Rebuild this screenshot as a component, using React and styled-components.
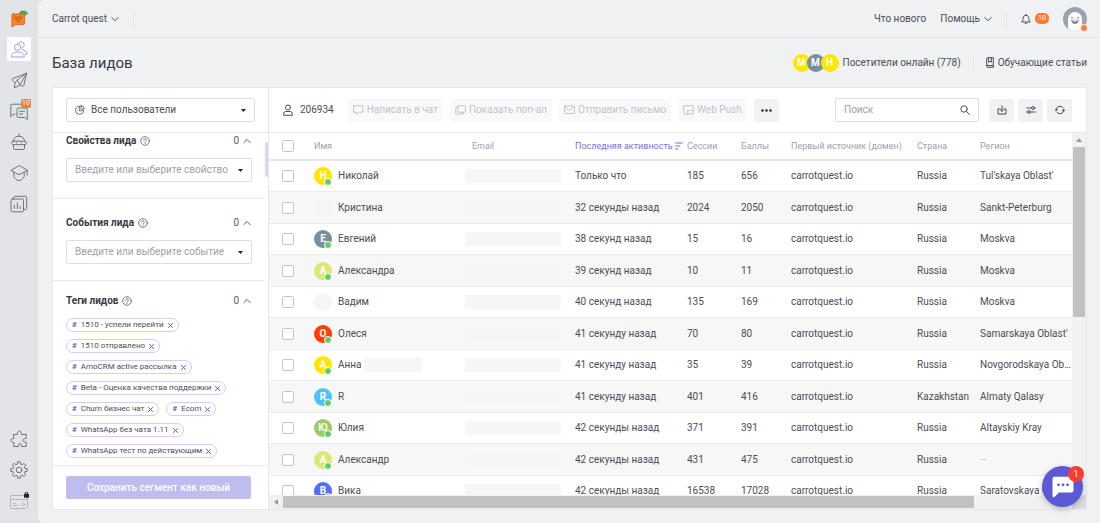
import React from 'react';
import styled, { createGlobalStyle } from 'styled-components';

const GlobalStyle = createGlobalStyle`
  * {
    box-sizing: border-box;
  }

  body {
    margin: 0;
    background: #e2e4e8;
    color: #4a4e57;
    font-family: Roboto, "Liberation Sans", sans-serif;
    font-size: 10px;
    line-height: 16px;
  }

  button, input, select {
    font: inherit;
    color: inherit;
  }

  h1, h2 {
    margin: 0;
  }
`;

/* Icons */

const Svg = styled.svg`
  display: block;
  flex: none;
  fill: none;
  stroke: currentColor;
  stroke-width: ${(p) => p.$stroke || 1};
  stroke-linecap: round;
  stroke-linejoin: round;
`;

const Icon = ({ w = 18, h = w, stroke, children }) => (
  <Svg width={w} height={h} viewBox={`0 0 ${w} ${h}`} $stroke={stroke} aria-hidden="true">
    {children}
  </Svg>
);

const LogoIcon = () => (
  <Icon>
    <path d="M9.800 4.700C9 2 11 .4 13.200 1.200c1.500-.6 3.600.2 4.500 2.300-1.300 1.700-3 2-4.700 1.500z" fill="#3fb34f" stroke="#2f9540" strokeWidth=".6" />
    <path d="M3.200 3.900h9.600a1.800 1.800 0 0 1 1.800 1.800v7.100a1.800 1.800 0 0 1-1.800 1.800H5.200l-3.300 2.500V5.700a1.500 1.500 0 0 1 1.300-1.800z" fill="#fb8427" stroke="#cf5f17" strokeWidth=".8" />
    <path d="M4 7.200h8.500M5.200 9.200h6M6.700 11.200h3" stroke="#a8440c" strokeWidth=".8" />
  </Icon>
);

const PeopleIcon = () => (
  <Icon>
    <circle cx="7.500" cy="7.200" r="3.100" />
    <path d="M1.200 16.600c.2-3.400 3-4.600 6.600-4.600s6.300 1.200 6.500 4.600zM8.200 3.600a3.200 3.200 0 1 1 3.500 4.500M12.300 9.500c2.900.7 4.500 2.300 4.700 4.700l-1.700.1" />
  </Icon>
);

const PlaneIcon = () => (
  <Icon>
    <path d="M16.600 2.200 3.200 7.400c-1.300.5-1.400 1.300-.8 1.900l2 2M16.600 2.200l-2.700 12c-.3 1.200-1.100 1.500-2 .9l-1.700-1.300M16.600 2.200 6.700 9.400c-1.200.9-2 3-2.300 6.900M7 9.300l3.200 4.500-4 2.400-1.800.1M10.300 13.600l6.300-11.400" />
  </Icon>
);

const ChatsIcon = () => (
  <Icon>
    <path d="M12.800 2.200H2A1.300 1.300 0 0 0 .8 3.500v11.200l2.500-2.500h1.500M16 6H8.200A1.300 1.300 0 0 0 7 7.300v6.900a1.300 1.300 0 0 0 1.300 1.300h6.400l2.600 2.100V7.300A1.300 1.300 0 0 0 16 6zM9.600 9.300h5M9.600 12h3" />
  </Icon>
);

const RobotIcon = () => (
  <Icon>
    <path d="M9 .9v2.300M3.500 8.200C3.500 5 5.700 3.200 9 3.200s5.500 1.800 5.500 5M3 8.200h12a1.200 1.200 0 0 1 1.200 1.200v1a1.200 1.200 0 0 1-1.200 1.200H3a1.200 1.200 0 0 1-1.200-1.200v-1A1.200 1.200 0 0 1 3 8.200zM3.500 11.600v3.700a1.200 1.200 0 0 0 1.200 1.200h8.600a1.200 1.200 0 0 0 1.200-1.200v-3.700M6.500 9.800v.2M11.500 9.800v.2" />
  </Icon>
);

const CapIcon = () => (
  <Icon>
    <path d="M9 1.700.8 6.500 9 10.700l8.200-4.200zM17.200 6.500v4.700M3.800 8.200v4.300c1.200 2.600 3 4 5.200 4s4-1.400 5.200-4V8.200" />
  </Icon>
);

const ReportIcon = () => (
  <Icon>
    <rect x="1" y="4" width="12.500" height="12.800" rx="1.300" />
    <path d="M3.800 4V2.500a1.200 1.200 0 0 1 1.200-1.200h10.500a1.200 1.200 0 0 1 1.200 1.200v10.800a1.200 1.200 0 0 1-1.200 1.200h-2M4.300 10.500v3M7.300 8v5.500M10.200 11.500v2" />
  </Icon>
);

const PuzzleIcon = () => (
  <Icon>
    <path d="M3.800 4.500h3.400c.4 0 .5-.3.400-.7C7.200 2.200 8 1 9.300 1s2.200 1.200 1.800 2.800c-.1.4.1.700.500.700h4.600v3.800c0 .4-.3.500-.7.400-1.500-.4-2.600.3-2.600 1.600s1.100 2 2.600 1.600c.4-.1.700.1.700.5v4.100h-4.300c-.3 0-.5-.3-.4-.6.3-1.300-.3-2.200-1.400-2.200s-1.700.9-1.400 2.200c.1.300-.1.600-.4.600H3.800v-4c0-.4-.2-.5-.6-.4C1.800 12.400.8 11.600.8 10.400s1-2 2.400-1.700c.4.100.6-.1.600-.4z" />
  </Icon>
);

const teeth = Array.from({ length: 8 }, (_, i) => {
  const at = (r, deg) => {
    const a = ((i * 45 + deg) * Math.PI) / 180;
    return `${(9 + r * Math.sin(a)).toFixed(2)} ${(9 - r * Math.cos(a)).toFixed(2)}`;
  };
  return `${at(8.3, -9)}L${at(8.3, 9)}L${at(6.2, 14)}L${at(6.2, 31)}`;
}).join('L');

const GearIcon = () => (
  <Icon>
    <path d={`M${teeth}z`} />
    <circle cx="9" cy="9" r="2.800" />
  </Icon>
);

const CardIcon = () => (
  <Icon w={20} h={18}>
    <g stroke="#b3b6bc">
      <rect x="1.500" y="3.500" width="17" height="13" rx="1" />
      <path d="M1.500 7.500h17M4.500 11.500h1.500M4.500 13.500h4" />
      <circle cx="14.500" cy="12.500" r="1.200" />
    </g>
    <rect x="15" y="1.700" width="5" height="4" rx=".6" fill="#22252b" stroke="none" />
    <path d="M16.300 2V1.300a1.200 1.200 0 0 1 2.400 0V2" stroke="#22252b" />
  </Icon>
);

const ChevronIcon = ({ up }) => (
  <Icon w={8}>
    <path d={up ? 'M.8 5.700 4 2.500l3.200 3.200' : 'M.8 2.500 4 5.700l3.200-3.200'} />
  </Icon>
);

const CaretIcon = () => (
  <Icon w={5} h={3}>
    <path d="M0 0h5L2.500 3z" fill="#22252b" stroke="none" />
  </Icon>
);

const BellIcon = () => (
  <Icon w={10}>
    <path d="M1 7.700c1-1 1.100-2 1.100-3.500C2.100 2.500 3.300 1.300 5 1.300s2.900 1.200 2.900 2.900c0 1.500.1 2.500 1.100 3.500zM3.900 9.200c.5.500 1.700.5 2.200 0M5 .5v.8" />
  </Icon>
);

const BookIcon = () => (
  <Icon w={8} h={11}>
    <path d="M.7 1.700A1 1 0 0 1 1.700.7h5.600v9.600H1.700a1 1 0 0 1-1-1zM.7 8.500h6.600M2.600 1v4.200l1.400-1 1.400 1V1" />
  </Icon>
);

const PieIcon = () => (
  <Icon w={10} stroke=".8">
    <path d="M4.300 1.200a4.100 4.100 0 1 0 4.500 4.500H4.300z" />
    <path d="M6 .7v3.400h3.400A3.400 3.400 0 0 0 6 .7z" />
  </Icon>
);

const QuestionIcon = () => (
  <Icon w={10} stroke=".8">
    <circle cx="5" cy="5" r="4.300" />
    <path d="M3.700 4a1.300 1.300 0 1 1 2 1.100c-.5.300-.7.500-.7 1M5 7.400v.1" />
  </Icon>
);

const UserIcon = () => (
  <Icon w={10} h={12}>
    <circle cx="5" cy="3.500" r="2.500" />
    <path d="M.7 10.900V9.500a2 2 0 0 1 2-2h4.600a2 2 0 0 1 2 2v1.400z" />
  </Icon>
);

const MessageIcon = () => (
  <Icon w={11} h={10}>
    <path d="M1 .8h9v6.400H5.500L3.200 9.300V7.200H1z" />
  </Icon>
);

const PopupIcon = () => (
  <Icon w={11} h={10}>
    <rect x="2.800" y=".8" width="7.600" height="6.400" rx=".6" />
    <path d="M2.800 2.800H.8V9h7.500V7.200" />
  </Icon>
);

const MailIcon = () => (
  <Icon w={11} h={10}>
    <rect x=".6" y="1" width="9.800" height="7.600" rx=".6" />
    <path d="m1 1.800 4.500 3.700L10 1.800" />
  </Icon>
);

const PushIcon = () => (
  <Icon w={11} h={10}>
    <path d="M4.700 9H.7V.8h9.600V9H4.700V5.500h5.600" />
  </Icon>
);

const DotsIcon = () => (
  <Icon w={11} h={3}>
    <g fill="#22252b" stroke="none">
      <circle cx="1.500" cy="1.500" r="1.200" />
      <circle cx="5.500" cy="1.500" r="1.200" />
      <circle cx="9.500" cy="1.500" r="1.200" />
    </g>
  </Icon>
);

const SearchIcon = () => (
  <Icon w={10}>
    <circle cx="4" cy="4" r="3.200" />
    <path d="m6.400 6.400 3 3" />
  </Icon>
);

const DownloadIcon = () => (
  <Icon w={10}>
    <path d="M3 4H1v5h8V4H7M5 .8v5.400M3.400 4.800 5 6.400l1.600-1.600" />
  </Icon>
);

const SlidersIcon = () => (
  <Icon w={10}>
    <path d="M.8 3h4.700M8.500 3h.8M.8 7h.8M4.500 7h4.800" />
    <circle cx="7" cy="3" r="1.400" />
    <circle cx="3" cy="7" r="1.400" />
  </Icon>
);

const RefreshIcon = () => (
  <Icon w={10}>
    <path d="M1.200 4.500A3.900 3.900 0 0 1 8 2.600M8.800 5.500A3.900 3.900 0 0 1 2 7.400" />
    <path d="M0 4.200h2.600L1.300 6zM7.400 5.800H10L8.700 4z" fill="currentColor" strokeWidth=".4" />
  </Icon>
);

const SortIcon = () => (
  <Icon w={8}>
    <path d="M.6 1h6.800M.6 4h4.300M.6 7h2.200" />
  </Icon>
);

const CrossIcon = () => (
  <Icon w={5}>
    <path d="m.5.500 4 4M4.500.500l-4 4" />
  </Icon>
);

const BotFace = () => (
  <Icon w={24}>
    <circle cx="12" cy="12" r="12" fill="#9ca2b0" stroke="none" />
    <path d="M5 21.500V12a7 7 0 0 1 14 0v9.500q-3 2.500-7 2.500t-7-2.500z" fill="#fff" stroke="none" />
    <path d="M8.200 10.800q1-1 2 0M13.800 10.800q1-1 2 0" stroke="#828998" />
    <path d="M8.200 12.800h7.600c0 2.800-1.600 4.200-3.800 4.200s-3.800-1.400-3.800-4.200z" fill="#828998" stroke="none" />
    <path d="M9.500 13.200h5v1h-5z" fill="#fff" stroke="none" />
  </Icon>
);

const BubbleIcon = () => (
  <Icon w={22}>
    <path d="M2.500.800h17a2 2 0 0 1 2 2v11.700a2 2 0 0 1-2 2H7l-4.300 4.300c-.9.900-2.200.4-2.200-.9V2.800a2 2 0 0 1 2-2z" fill="#fff" stroke="none" />
    <g fill="#5b5ad4" stroke="none">
      <circle cx="6.500" cy="8.800" r="1.400" />
      <circle cx="11" cy="8.800" r="1.400" />
      <circle cx="15.500" cy="8.800" r="1.400" />
    </g>
  </Icon>
);

/* Shell */

const Shell = styled.div`
  display: flex;
  height: 100vh;
`;

const Sidebar = styled.nav`
  display: flex;
  flex-direction: column;
  align-items: center;
  gap: 7px;
  width: 38px;
  padding: 10px 0;
`;

const Logo = styled.a`
  margin-bottom: 2px;
`;

const NavLink = styled.a`
  position: relative;
  display: flex;
  align-items: center;
  justify-content: center;
  width: 24px;
  height: 24px;
  border-radius: 2px;
  color: ${(p) => (p.$active ? '#9c9be6' : '#70757e')};
  background: ${(p) => (p.$active ? '#fff' : 'none')};
`;

const NavBadge = styled.span`
  position: absolute;
  top: 0;
  right: 0;
  width: 10px;
  border-radius: 2px;
  background: #fd7a35;
  color: #fff;
  font-size: 7px;
  line-height: 9px;
  text-align: center;
`;

const Spacer = styled.div`
  flex: 1;
`;

const Main = styled.main`
  display: flex;
  flex: 1;
  flex-direction: column;
  min-width: 0;
  border-radius: 6px 0 0 6px;
  background: #f0f1f3;
`;

const TopBar = styled.header`
  display: flex;
  align-items: center;
  gap: 14px;
  height: 38px;
  padding: 0 13px 0 14px;
  border-bottom: 1px solid #e4e6ea;
`;

const TextButton = styled.button`
  display: flex;
  align-items: center;
  gap: 4px;
  padding: 0;
  border: 0;
  background: none;
`;

const TextLink = styled.a`
  display: flex;
  align-items: center;
  gap: 4px;
  color: inherit;
  text-decoration: none;
  white-space: nowrap;
`;

const Divider = styled.span`
  width: 1px;
  height: 16px;
  background: #e4e6ea;
`;

const Counter = styled.span`
  width: 14px;
  border-radius: 5px;
  background: #fd7a35;
  color: #fff;
  font-size: 7px;
  line-height: 11px;
  text-align: center;
`;

const Profile = styled.button`
  position: relative;
  padding: 0;
  border: 0;
  background: none;
`;

const StatusDot = styled.span`
  position: absolute;
  right: ${(p) => (p.$busy ? -1 : 0)}px;
  bottom: -1px;
  width: 8px;
  height: 8px;
  border: 1px solid ${(p) => (p.$busy ? '#f0f1f3' : '#fff')};
  border-radius: 50%;
  background: ${(p) => (p.$busy ? '#fd7a35' : '#62cc62')};
`;

const TitleBar = styled.div`
  display: flex;
  align-items: center;
  gap: 12px;
  height: 49px;
  padding: 0 13px 0 14px;
`;

const Title = styled.h1`
  font-size: 15px;
  font-weight: 400;
  color: #363a42;
`;

const Stack = styled.span`
  display: flex;

  > * + * {
    margin-left: -4px;
  }
`;

const Avatar = styled.span`
  position: relative;
  flex: none;
  width: 18px;
  height: 18px;
  border-radius: 50%;
  background: ${(p) => p.$color};
  color: #fff;
  font-size: 10px;
  font-weight: 700;
  line-height: 18px;
  text-align: center;
`;

const Panel = styled.div`
  display: flex;
  flex: 1;
  min-height: 0;
  margin: 0 13px 13px 14px;
  border: 1px solid #e8e9ed;
  background: #fff;
`;

/* Filters */

const Filters = styled.aside`
  display: flex;
  flex: none;
  flex-direction: column;
  width: 216px;
  border-right: 1px solid #e4e6ea;
`;

const SegmentBar = styled.div`
  display: flex;
  align-items: center;
  height: 45px;
  padding: 0 13px;
  border-bottom: 1px solid #e8e9ed;
`;

const Field = styled.label`
  display: flex;
  flex: ${(p) => (p.$grow ? 1 : 'none')};
  align-items: center;
  gap: 6px;
  height: 24px;
  padding: 0 8px;
  border: 1px solid #dcdee4;
  border-radius: 2px;
  background: #fff;
`;

const Select = styled.select`
  flex: 1;
  min-width: 0;
  padding: 0;
  border: 0;
  outline: 0;
  appearance: none;
  background: none;
  color: ${(p) => (p.$muted ? '#9da1ac' : 'inherit')};
`;

const FilterBody = styled.div`
  display: flex;
  flex: 1;
  min-height: 0;
`;

const FilterList = styled.div`
  flex: 1;
  overflow: hidden;
`;

const FilterThumb = styled.div`
  width: 3px;
  height: 35px;
  margin-top: 9px;
  border-radius: 2px;
  background: #d6d6f6;
`;

const Section = styled.section`
  display: flex;
  flex-direction: column;
  gap: 9px;
  padding: ${(p) => (p.$dense ? 12 : 16)}px 13px 16px;
  border-bottom: 1px solid #e8e9ed;

  &:first-child {
    padding-top: 0;
  }
`;

const SectionHead = styled.div`
  display: flex;
  align-items: center;
  gap: 4px;
  padding-right: 1px;
  color: #565b65;
`;

const SectionTitle = styled.h2`
  color: #363a42;
  font-size: 10px;
  font-weight: 700;
`;

const Tags = styled.div`
  display: flex;
  flex-wrap: wrap;
  gap: 7px;
`;

const Tag = styled.span`
  display: flex;
  align-items: center;
  gap: 4px;
  height: 14px;
  padding: 0 5px;
  border: 1px solid #cfcff3;
  border-radius: 7px;
  font-size: 8px;
  white-space: nowrap;

  b {
    color: #5b5ad4;
  }
`;

const TagRemove = styled.button`
  padding: 0;
  border: 0;
  background: none;
  color: #5b5ad4;
`;

const FilterFooter = styled.div`
  padding: 10px 13px;
  border-top: 1px solid #e8e9ed;
`;

const SaveButton = styled.button`
  width: 185px;
  height: 23px;
  padding: 0;
  border: 0;
  border-radius: 2px;
  background: #bebdf0;
  color: #fff;
  font-weight: 500;
`;

/* Leads */

const Leads = styled.section`
  display: flex;
  flex: 1;
  flex-direction: column;
  min-width: 0;
`;

const Toolbar = styled.div`
  display: flex;
  align-items: center;
  justify-content: space-between;
  height: 45px;
  padding: 0 14px;
  border-bottom: 1px solid #e8e9ed;
`;

const ToolGroup = styled.div`
  display: flex;
  align-items: center;
  gap: ${(p) => p.$gap}px;
`;

const Count = styled.div`
  display: flex;
  align-items: center;
  gap: 7px;
  margin-right: 7px;
`;

const ToolButton = styled.button`
  display: flex;
  align-items: center;
  justify-content: center;
  gap: 3px;
  min-width: 25px;
  height: 23px;
  padding: 0 5px;
  border: 0;
  border-radius: 2px;
  background: #f0f1f3;
  white-space: nowrap;

  &:disabled {
    background: #f8f9fa;
    color: #c1c4ca;
  }
`;

const SearchField = styled(Field)`
  width: 144px;
  margin-right: 6px;
`;

const SearchInput = styled.input`
  flex: 1;
  min-width: 0;
  padding: 0;
  border: 0;
  outline: 0;

  &::placeholder {
    color: #9da1ac;
  }
`;

const TableArea = styled.div`
  display: grid;
  flex: 1;
  grid-template: minmax(0, 1fr) 14px / minmax(0, 1fr) 14px;
  min-height: 0;
`;

const TableView = styled.div`
  overflow: hidden;
`;

const Table = styled.table`
  width: 100%;
  border-collapse: separate;
  border-spacing: 0;
  table-layout: fixed;
`;

const Col = styled.col`
  width: ${(p) => (p.$width ? `${p.$width}px` : 'auto')};
`;

const Th = styled.th`
  height: 28px;
  padding: 0;
  padding-left: ${(p) => p.$indent || 0}px;
  border-bottom: 2px solid #e4e5ed;
  color: ${(p) => (p.$sorted ? '#7473dd' : '#9da1ac')};
  font-size: 9px;
  font-weight: 400;
  text-align: left;
  white-space: nowrap;
`;

const SortButton = styled(TextButton)`
  gap: 2px;
`;

const Tr = styled.tr`
  > td {
    height: 31px;
  }

  &:nth-child(even) > td {
    height: 32px;
    background: #f7f7f7;
  }
`;

const Td = styled.td`
  padding: 0;
  border-bottom: 1px solid #ebecef;
  overflow: hidden;
  text-overflow: ellipsis;
  white-space: nowrap;
`;

const Check = styled.input`
  display: block;
  width: 12px;
  height: 12px;
  margin: 0 0 0 13px;
  border: 1px solid #c3c6ce;
  border-radius: 2px;
  appearance: none;
  background: #fff;
`;

const Person = styled.span`
  display: flex;
  align-items: center;
  gap: 6px;
`;

const FullName = styled.span`
  display: flex;
  align-items: center;
  gap: 2px;
`;

const Redacted = styled.span`
  display: block;
  width: ${(p) => p.$width}px;
  height: 14px;
  background: #f6f6f7;
`;

const Empty = styled.span`
  color: #c1c4ca;
`;

const Track = styled.div`
  display: flex;
  flex-direction: ${(p) => (p.$vertical ? 'column' : 'row')};
  padding: ${(p) => (p.$vertical ? '0 1px' : '1px 0')};
  background: #f1f1f1;
`;

const Arrow = styled.div`
  display: flex;
  align-items: center;
  justify-content: center;
  flex: 0 0 14px;
  color: #9a9a9a;
`;

const Thumb = styled.div`
  flex: 0 0 ${(p) => p.$size};
  background: #c1c1c1;
`;

const Corner = styled.div`
  background: #dcdcdc;
`;

const ChatButton = styled.button`
  position: fixed;
  right: 17px;
  bottom: 16px;
  display: flex;
  align-items: center;
  justify-content: center;
  width: 41px;
  height: 41px;
  padding: 0;
  border: 0;
  border-radius: 50%;
  background: #5b5ad4;
  box-shadow: 0 2px 6px rgba(0, 0, 0, 0.25);
`;

const ChatCount = styled.span`
  position: absolute;
  top: 0;
  right: -1px;
  width: 16px;
  border-radius: 50%;
  background: #ff3b30;
  color: #fff;
  font-size: 9px;
  line-height: 16px;
`;

const navTop = [
  { label: 'Лиды', icon: <PeopleIcon />, active: true },
  { label: 'Сообщения', icon: <PlaneIcon /> },
  { label: 'Диалоги', icon: <ChatsIcon />, badge: 10 },
  { label: 'Чат-боты', icon: <RobotIcon /> },
  { label: 'База знаний', icon: <CapIcon /> },
  { label: 'Аналитика', icon: <ReportIcon /> },
];

const navBottom = [
  { label: 'Интеграции', icon: <PuzzleIcon /> },
  { label: 'Настройки', icon: <GearIcon /> },
  { label: 'Оплата', icon: <CardIcon /> },
];

const tags = [
  '1510 - успели перейти',
  '1510 отправлено',
  'AmoCRM active рассылка',
  'Beta - Оценка качества поддержки',
  'Churn бизнес чат',
  'Ecom',
  'WhatsApp без чата 1.11',
  'WhatsApp тест по действующим',
];

const actions = [
  { label: 'Написать в чат', icon: <MessageIcon /> },
  { label: 'Показать поп-ап', icon: <PopupIcon /> },
  { label: 'Отправить письмо', icon: <MailIcon /> },
  { label: 'Web Push', icon: <PushIcon /> },
];

const columns = [45, 151, 110, 112, 54, 50, 126, 63, 0];

const leads = [
  { name: 'Николай', color: '#ffe600', seen: 'Только что', sessions: 185, score: 656, country: 'Russia', region: "Tul'skaya Oblast'" },
  { name: 'Кристина', seen: '32 секунды назад', sessions: 2024, score: 2050, country: 'Russia', region: 'Sankt-Peterburg' },
  { name: 'Евгений', color: '#78909c', seen: '38 секунд назад', sessions: 15, score: 16, country: 'Russia', region: 'Moskva' },
  { name: 'Александра', color: '#dce775', seen: '39 секунд назад', sessions: 10, score: 11, country: 'Russia', region: 'Moskva' },
  { name: 'Вадим', seen: '40 секунд назад', sessions: 135, score: 169, country: 'Russia', region: 'Moskva' },
  { name: 'Олеся', color: '#ff3d00', seen: '41 секунду назад', sessions: 70, score: 80, country: 'Russia', region: "Samarskaya Oblast'" },
  { name: 'Анна', color: '#ffe600', surname: true, seen: '41 секунду назад', sessions: 35, score: 39, country: 'Russia', region: "Novgorodskaya Oblast'" },
  { name: 'R', color: '#4fc3f7', seen: '41 секунду назад', sessions: 401, score: 416, country: 'Kazakhstan', region: 'Almaty Qalasy' },
  { name: 'Юлия', color: '#9ccc65', seen: '42 секунды назад', sessions: 371, score: 391, country: 'Russia', region: 'Altayskiy Kray' },
  { name: 'Александр', color: '#dce775', seen: '42 секунды назад', sessions: 431, score: 475, country: 'Russia' },
  { name: 'Вика', color: '#536dfe', seen: '42 секунды назад', sessions: 16538, score: 17028, country: 'Russia', region: "Saratovskaya Oblast'" },
];

const NavItem = ({ label, icon, active, badge }) => (
  <NavLink href="#" aria-label={label} $active={active}>
    {icon}
    {badge && <NavBadge>{badge}</NavBadge>}
  </NavLink>
);

const FilterSection = ({ title, dense, children }) => (
  <Section $dense={dense}>
    <SectionHead>
      <SectionTitle>{title}</SectionTitle>
      <QuestionIcon />
      <Spacer />
      <span>0</span>
      <ChevronIcon up />
    </SectionHead>
    {children}
  </Section>
);

const FilterSelect = ({ text }) => (
  <Field>
    <Select aria-label={text} $muted>
      <option>{text}</option>
    </Select>
    <CaretIcon />
  </Field>
);

const LeadRow = ({ lead }) => (
  <Tr>
    <Td>
      <Check type="checkbox" aria-label={lead.name} />
    </Td>
    <Td>
      <Person>
        <Avatar $color={lead.color || '#f5f5f6'}>
          {lead.color && lead.name[0]}
          {lead.color && <StatusDot />}
        </Avatar>
        <FullName>
          {lead.name}
          {lead.surname && <Redacted $width={58} />}
        </FullName>
      </Person>
    </Td>
    <Td>
      <Redacted $width={96} />
    </Td>
    <Td>{lead.seen}</Td>
    <Td>{lead.sessions}</Td>
    <Td>{lead.score}</Td>
    <Td>carrotquest.io</Td>
    <Td>{lead.country}</Td>
    <Td>{lead.region || <Empty>–</Empty>}</Td>
  </Tr>
);

const App = () => (
  <Shell>
    <GlobalStyle />
    <Sidebar>
      <Logo href="#" aria-label="Carrot quest">
        <LogoIcon />
      </Logo>
      {navTop.map((item) => (
        <NavItem key={item.label} {...item} />
      ))}
      <Spacer />
      {navBottom.map((item) => (
        <NavItem key={item.label} {...item} />
      ))}
    </Sidebar>

    <Main>
      <TopBar>
        <TextButton>
          Carrot quest
          <ChevronIcon />
        </TextButton>
        <Divider />
        <Spacer />
        <TextLink href="#">Что нового</TextLink>
        <TextButton>
          Помощь
          <ChevronIcon />
        </TextButton>
        <Divider />
        <TextButton aria-label="Уведомления">
          <BellIcon />
          <Counter>10</Counter>
        </TextButton>
        <Profile aria-label="Профиль">
          <BotFace />
          <StatusDot $busy />
        </Profile>
      </TopBar>

      <TitleBar>
        <Title>База лидов</Title>
        <Spacer />
        <TextLink href="#">
          <Stack>
            <Avatar $color="#ffe600">М</Avatar>
            <Avatar $color="#78909c">М</Avatar>
            <Avatar $color="#ffe600">Н</Avatar>
          </Stack>
          Посетители онлайн (778)
        </TextLink>
        <Divider />
        <TextLink href="#">
          <BookIcon />
          Обучающие статьи
        </TextLink>
      </TitleBar>

      <Panel>
        <Filters>
          <SegmentBar>
            <Field $grow>
              <PieIcon />
              <Select aria-label="Сегмент">
                <option>Все пользователи</option>
              </Select>
              <CaretIcon />
            </Field>
          </SegmentBar>
          <FilterBody>
            <FilterList>
              <FilterSection title="Свойства лида">
                <FilterSelect text="Введите или выберите свойство" />
              </FilterSection>
              <FilterSection title="События лида">
                <FilterSelect text="Введите или выберите событие" />
              </FilterSection>
              <FilterSection title="Теги лидов" dense>
                <Tags>
                  {tags.map((tag) => (
                    <Tag key={tag}>
                      <b>#</b>
                      {tag}
                      <TagRemove aria-label={`Убрать ${tag}`}>
                        <CrossIcon />
                      </TagRemove>
                    </Tag>
                  ))}
                </Tags>
              </FilterSection>
            </FilterList>
            <FilterThumb />
          </FilterBody>
          <FilterFooter>
            <SaveButton disabled>Сохранить сегмент как новый</SaveButton>
          </FilterFooter>
        </Filters>

        <Leads>
          <Toolbar>
            <ToolGroup $gap={7}>
              <Count>
                <UserIcon />
                206934
              </Count>
              {actions.map(({ label, icon }) => (
                <ToolButton key={label} disabled>
                  {icon}
                  {label}
                </ToolButton>
              ))}
              <ToolButton aria-label="Ещё">
                <DotsIcon />
              </ToolButton>
            </ToolGroup>
            <ToolGroup $gap={4}>
              <SearchField>
                <SearchInput type="text" placeholder="Поиск" aria-label="Поиск" />
                <SearchIcon />
              </SearchField>
              <ToolButton aria-label="Экспорт">
                <DownloadIcon />
              </ToolButton>
              <ToolButton aria-label="Столбцы">
                <SlidersIcon />
              </ToolButton>
              <ToolButton aria-label="Обновить">
                <RefreshIcon />
              </ToolButton>
            </ToolGroup>
          </Toolbar>

          <TableArea>
            <TableView>
              <Table>
                <colgroup>
                  {columns.map((width, i) => (
                    <Col key={i} $width={width} />
                  ))}
                </colgroup>
                <thead>
                  <tr>
                    <Th>
                      <Check type="checkbox" aria-label="Выбрать всех" />
                    </Th>
                    <Th>Имя</Th>
                    <Th $indent={7}>Email</Th>
                    <Th $sorted>
                      <SortButton>
                        Последняя активность
                        <SortIcon />
                      </SortButton>
                    </Th>
                    <Th>Сессии</Th>
                    <Th>Баллы</Th>
                    <Th>Первый источник (домен)</Th>
                    <Th>Страна</Th>
                    <Th>Регион</Th>
                  </tr>
                </thead>
                <tbody>
                  {leads.map((lead) => (
                    <LeadRow key={lead.name} lead={lead} />
                  ))}
                </tbody>
              </Table>
            </TableView>
            <Track $vertical>
              <Arrow>
                <Icon w={6} h={4}>
                  <path d="M0 4h6L3 0z" fill="currentColor" stroke="none" />
                </Icon>
              </Arrow>
              <Thumb $size="47%" />
            </Track>
            <Track>
              <Arrow>
                <Icon w={4} h={6}>
                  <path d="M4 0v6L0 3z" fill="currentColor" stroke="none" />
                </Icon>
              </Arrow>
              <Thumb $size="86%" />
            </Track>
            <Corner />
          </TableArea>
        </Leads>
      </Panel>
    </Main>

    <ChatButton aria-label="Открыть чат">
      <BubbleIcon />
      <ChatCount>1</ChatCount>
    </ChatButton>
  </Shell>
);

export default App;
